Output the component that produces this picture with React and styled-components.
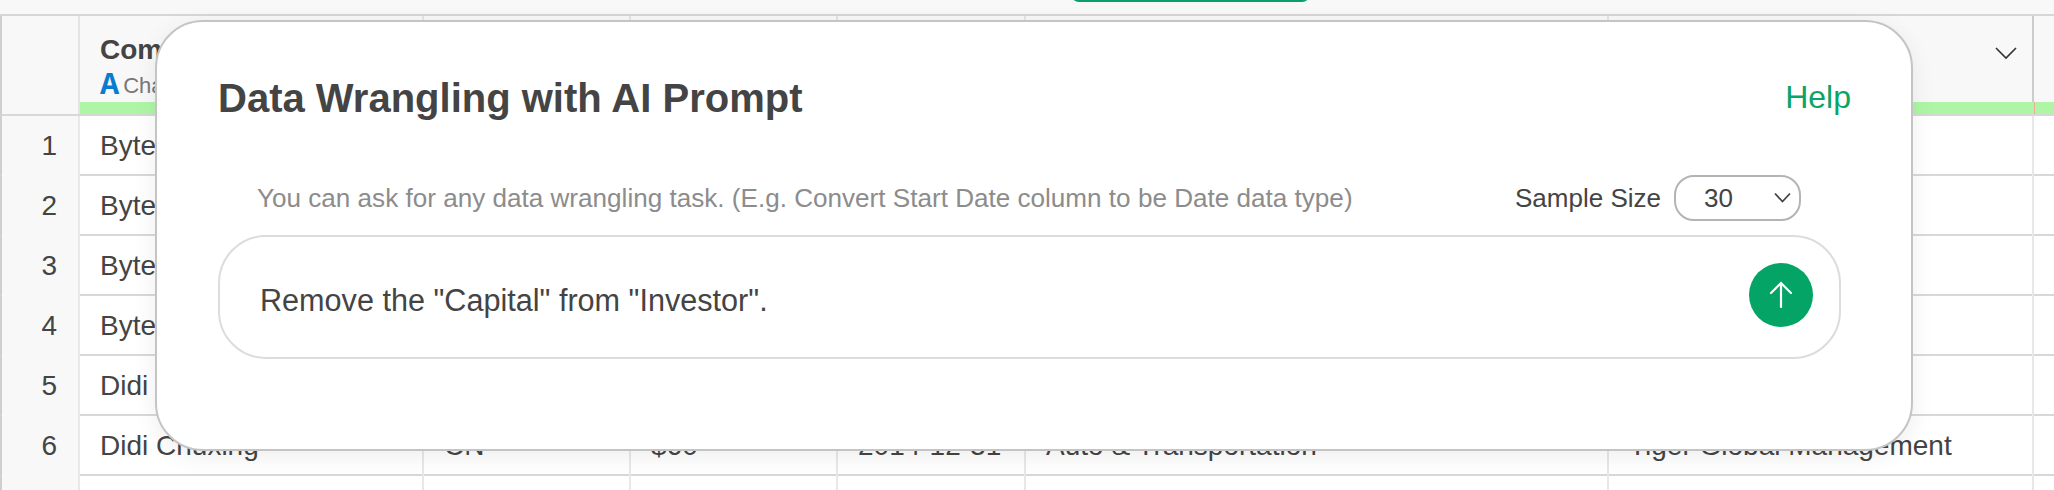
import React from 'react';
import styled, { createGlobalStyle } from 'styled-components';

const GlobalStyle = createGlobalStyle`
  html, body {
    margin: 0;
    height: 100%;
    overflow: hidden;
    background: #fff;
    font-family: "Liberation Sans", Arial, sans-serif;
    color: #444;
  }
`;

const Page = styled.div`
  position: relative;
  width: 2054px;
  height: 490px;
  overflow: hidden;
`;

const TopBar = styled.div`
  position: relative;
  height: 14px;
  background: #f8f8f8;
  border-bottom: 2px solid #d6d6d6;
`;

const TopPill = styled.div`
  position: absolute;
  left: 1071px;
  top: -14px;
  width: 239px;
  height: 16px;
  border-radius: 8px;
  background: #0a9f68;
`;

const Row = styled.div`
  display: grid;
  grid-template-columns: 78px 344px 207px 207px 188px 583px 425px 20px;
  height: ${(p) => (p.$head ? '100px' : '60px')};
  border-left: 2px solid #cfcfcf;
  border-bottom: 2px solid #d8d8d8;
  box-sizing: border-box;
  position: relative;
  font-size: 28px;
`;

const HeadCell = styled.div`
  background: #f8f8f8;
  border-right: 2px solid ${(p) => (p.$strong ? '#cccccc' : '#e4e4e4')};
  box-sizing: border-box;
  padding: 18px 0 0 20px;
  position: relative;
`;

const Band = styled.div`
  position: absolute;
  left: 78px;
  right: 0;
  bottom: 0;
  height: 12px;
  background: #aef6a6;
`;

const BandMark = styled.div`
  position: absolute;
  left: 1954px;
  top: 0;
  bottom: 0;
  width: 1px;
  background: #f2a9a0;
`;

const ColName = styled.div`
  font-weight: 700;
  line-height: 32px;
  white-space: nowrap;
`;

const ColType = styled.div`
  display: flex;
  align-items: center;
  gap: 4px;
  margin-top: 6px;
  font-size: 22px;
  line-height: 28px;
  color: #777;
  white-space: nowrap;
`;

const TypeGlyph = styled.span`
  font-family: "Liberation Mono", monospace;
  font-weight: 700;
  font-size: 32px;
  color: #0a7cce;
`;

const Chevron = styled.svg`
  position: absolute;
  right: 15px;
  top: 30px;
  width: 22px;
  height: 14px;
  fill: none;
  stroke: #333;
  stroke-width: 1.6;
`;

const NumCell = styled.div`
  background: #f8f8f8;
  border-right: 2px solid #e8e8e8;
  box-sizing: border-box;
  text-align: right;
  padding-right: 21px;
  line-height: 60px;
`;

const Cell = styled.div`
  border-right: 2px solid ${(p) => (p.$plain ? 'transparent' : '#e8e8e8')};
  box-sizing: border-box;
  padding-left: 20px;
  line-height: 60px;
  white-space: nowrap;
  overflow: hidden;
`;

const Modal = styled.div`
  position: absolute;
  left: 155px;
  top: 20px;
  width: 1758px;
  height: 431px;
  box-sizing: border-box;
  background: #fff;
  border: 2px solid #c4c4c4;
  border-radius: 48px;
  box-shadow: 0 6px 24px rgba(0, 0, 0, 0.07);
  padding: 50px 60px 0 61px;
`;

const ModalHead = styled.div`
  display: flex;
  justify-content: space-between;
  align-items: center;
  height: 52px;
`;

const Title = styled.h1`
  margin: 0;
  font-size: 40px;
  font-weight: 700;
  color: #444;
`;

const Help = styled.a`
  margin-bottom: 2px;
  font-size: 32px;
  color: #0aa467;
`;

const OptionRow = styled.div`
  display: flex;
  justify-content: space-between;
  align-items: center;
  margin-top: 51px;
  padding: 0 50px 0 39px;
  height: 46px;
`;

const Hint = styled.div`
  font-size: 26.1px;
  color: #8c8c8c;
`;

const SampleGroup = styled.div`
  display: flex;
  align-items: center;
  gap: 13px;
  font-size: 26px;
`;

const SelectBox = styled.div`
  position: relative;
  width: 127px;
  height: 46px;
  box-sizing: border-box;
  border: 2px solid #b4b4b4;
  border-radius: 20px;
  padding-left: 28px;
  line-height: 42px;
  font-size: 26px;
`;

const SelectArrow = styled.svg`
  position: absolute;
  right: 8px;
  top: 15px;
  width: 17px;
  height: 11px;
  fill: none;
  stroke: #444;
  stroke-width: 1.8;
`;

const PromptBox = styled.div`
  display: flex;
  justify-content: space-between;
  align-items: center;
  margin: 14px 10px 0 0;
  height: 124px;
  box-sizing: border-box;
  border: 2px solid #dcdcdc;
  border-radius: 48px;
  padding: 0 26px 0 40px;
  font-size: 30.6px;
  color: #444;
`;

const PromptText = styled.span`
  margin-top: 6px;
`;

const SendButton = styled.button`
  display: flex;
  align-items: center;
  justify-content: center;
  width: 64px;
  height: 64px;
  margin-bottom: 4px;
  padding: 0;
  border: none;
  border-radius: 50%;
  background: #04a467;
`;

// only the cells that peek out from behind the dialog have text
const rows = [
  { n: 1, values: ['Byte', '', '', '', '', ''] },
  { n: 2, values: ['Byte', '', '', '', '', ''] },
  { n: 3, values: ['Byte', '', '', '', '', ''] },
  { n: 4, values: ['Byte', '', '', '', '', ''] },
  { n: 5, values: ['Didi', '', '', '', '', ''] },
  { n: 6, values: ['Didi Chuxing', 'CN', '$60', '2014-12-31', 'Auto & Transportation', 'Tiger Global Management'] },
  { n: '', values: ['', '', '', '', '', ''] },
];

const headers = ['Com', '', '', '', '', ''];

export default function App() {
  return (
    <Page>
      <GlobalStyle />
      <TopBar>
        <TopPill />
      </TopBar>
      <Row $head>
        <HeadCell />
        {headers.map((h, i) => (
          <HeadCell key={i} $strong={i === 5}>
            {h && <ColName>{h}</ColName>}
            {h && (
              <ColType>
                <TypeGlyph>A</TypeGlyph>Cha
              </ColType>
            )}
            {i === 5 && (
              <Chevron viewBox="0 0 22 14">
                <path d="M1 2l10 10L21 2" />
              </Chevron>
            )}
          </HeadCell>
        ))}
        <HeadCell />
        <Band>
          <BandMark />
        </Band>
      </Row>
      {rows.map((r, i) => (
        <Row key={i}>
          <NumCell>{r.n}</NumCell>
          {r.values.map((v, j) => (
            <Cell key={j}>{v}</Cell>
          ))}
          <Cell $plain />
        </Row>
      ))}
      <Modal>
        <ModalHead>
          <Title>Data Wrangling with AI Prompt</Title>
          <Help>Help</Help>
        </ModalHead>
        <OptionRow>
          <Hint>You can ask for any data wrangling task. (E.g. Convert Start Date column to be Date data type)</Hint>
          <SampleGroup>
            Sample Size
            <SelectBox>
              30
              <SelectArrow viewBox="0 0 17 11">
                <path d="M1 1.5l7.5 8 7.5-8" />
              </SelectArrow>
            </SelectBox>
          </SampleGroup>
        </OptionRow>
        <PromptBox>
          <PromptText>Remove the "Capital" from "Investor".</PromptText>
          <SendButton>
            <svg width="24" height="28" viewBox="0 0 24 28" fill="none" stroke="#fff" strokeWidth="2.2" strokeLinecap="round">
              <path d="M12 26V3M2 12l10-10 10 10" />
            </svg>
          </SendButton>
        </PromptBox>
      </Modal>
    </Page>
  );
}
